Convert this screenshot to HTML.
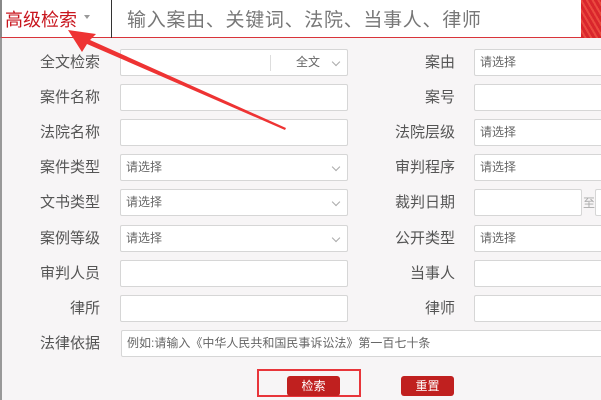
<!DOCTYPE html>
<html><head><meta charset="utf-8"><style>
*{margin:0;padding:0;box-sizing:border-box}
body{width:601px;height:400px;overflow:hidden;background:#f7f5f6;font-family:"Liberation Sans","Noto Sans CJK SC",sans-serif;position:relative}
.top{position:absolute;left:0;top:0;width:601px;height:38px;background:#fff;border-bottom:1px solid #d9343a;border-left:2px solid #888}
.adv{position:absolute;left:3px;top:6px;font-size:18px;color:#c8161e}
.tri{position:absolute;left:82px;top:15px;width:0;height:0;border-left:3.5px solid transparent;border-right:3.5px solid transparent;border-top:4px solid #999}
.div{position:absolute;left:109px;top:0;width:1px;height:38px;background:#333}
.ph{position:absolute;left:125px;top:5px;font-size:19px;letter-spacing:0.7px;color:#777}
.strip{position:absolute;left:579px;top:0;width:22px;height:38px;background:repeating-linear-gradient(60deg,#d9262c 0 3px,#ea4a3f 3px 5px)}
.leftb{position:absolute;left:0;top:38px;width:2px;height:362px;background:#999}
.lb{position:absolute;font-size:15px;color:#555;text-align:right;width:90px;line-height:27px}
.in{position:absolute;height:27px;background:#fff;border:1px solid #d6d6d6;border-radius:2px;font-size:12px;color:#666;line-height:25px;padding-left:5px}
.ch{position:absolute;right:8px;top:9px;width:6px;height:6px;border-right:1px solid #aaa;border-bottom:1px solid #aaa;transform:rotate(45deg)}
.btn{position:absolute;top:376px;height:20px;width:53px;background:#c0201f;color:#fff;font-size:12px;text-align:center;line-height:20px;border-radius:3px}
</style></head><body>
<div class="top"><div class="adv">高级检索</div><div class="tri"></div><div class="div"></div><div class="ph">输入案由、关键词、法院、当事人、律师</div><div class="strip"></div></div>
<div class="leftb"></div>

<div class="lb" style="left:10px;top:49px">全文检索</div>
<div class="in" style="left:120px;top:49px;width:228px"><div style="position:absolute;left:149px;top:5px;width:1px;height:16px;background:#ddd"></div><span style="position:absolute;left:175px">全文</span><div class="ch"></div></div>
<div class="lb" style="left:10px;top:84px">案件名称</div>
<div class="in" style="left:120px;top:84px;width:228px"></div>
<div class="lb" style="left:10px;top:119px">法院名称</div>
<div class="in" style="left:120px;top:119px;width:228px"></div>
<div class="lb" style="left:10px;top:154px">案件类型</div>
<div class="in" style="left:120px;top:154px;width:228px">请选择<div class="ch"></div></div>
<div class="lb" style="left:10px;top:189px">文书类型</div>
<div class="in" style="left:120px;top:189px;width:228px">请选择<div class="ch"></div></div>
<div class="lb" style="left:10px;top:225px">案例等级</div>
<div class="in" style="left:120px;top:225px;width:228px">请选择<div class="ch"></div></div>
<div class="lb" style="left:10px;top:260px">审判人员</div>
<div class="in" style="left:120px;top:260px;width:228px"></div>
<div class="lb" style="left:10px;top:295px">律所</div>
<div class="in" style="left:120px;top:295px;width:228px"></div>
<div class="lb" style="left:10px;top:330px">法律依据</div>
<div class="in" style="left:121px;top:330px;width:490px">例如:请输入《中华人民共和国民事诉讼法》第一百七十条</div>

<div class="lb" style="left:365px;top:49px">案由</div>
<div class="in" style="left:474px;top:49px;width:140px">请选择</div>
<div class="lb" style="left:365px;top:84px">案号</div>
<div class="in" style="left:474px;top:84px;width:140px"></div>
<div class="lb" style="left:365px;top:119px">法院层级</div>
<div class="in" style="left:474px;top:119px;width:140px">请选择</div>
<div class="lb" style="left:365px;top:154px">审判程序</div>
<div class="in" style="left:474px;top:154px;width:140px">请选择</div>
<div class="lb" style="left:365px;top:189px">裁判日期</div>
<div class="in" style="left:474px;top:189px;width:108px"></div>
<div style="position:absolute;left:583px;top:194px;font-size:12px;color:#aaa">至</div>
<div class="in" style="left:595px;top:189px;width:20px"></div>
<div class="lb" style="left:365px;top:225px">公开类型</div>
<div class="in" style="left:474px;top:225px;width:140px">请选择</div>
<div class="lb" style="left:365px;top:260px">当事人</div>
<div class="in" style="left:474px;top:260px;width:140px"></div>
<div class="lb" style="left:365px;top:295px">律师</div>
<div class="in" style="left:474px;top:295px;width:140px"></div>

<div style="position:absolute;left:257px;top:369px;width:104px;height:28px;border:2px solid #e8353a"></div>
<div class="btn" style="left:287px">检索</div>
<div class="btn" style="left:401px">重置</div>

<svg style="position:absolute;left:0;top:0" width="601" height="400">
<polygon points="68,30 96,34 90,40 286,128 285,130 87,44 82,52" fill="#ee3333"/>
</svg>
</body></html>
